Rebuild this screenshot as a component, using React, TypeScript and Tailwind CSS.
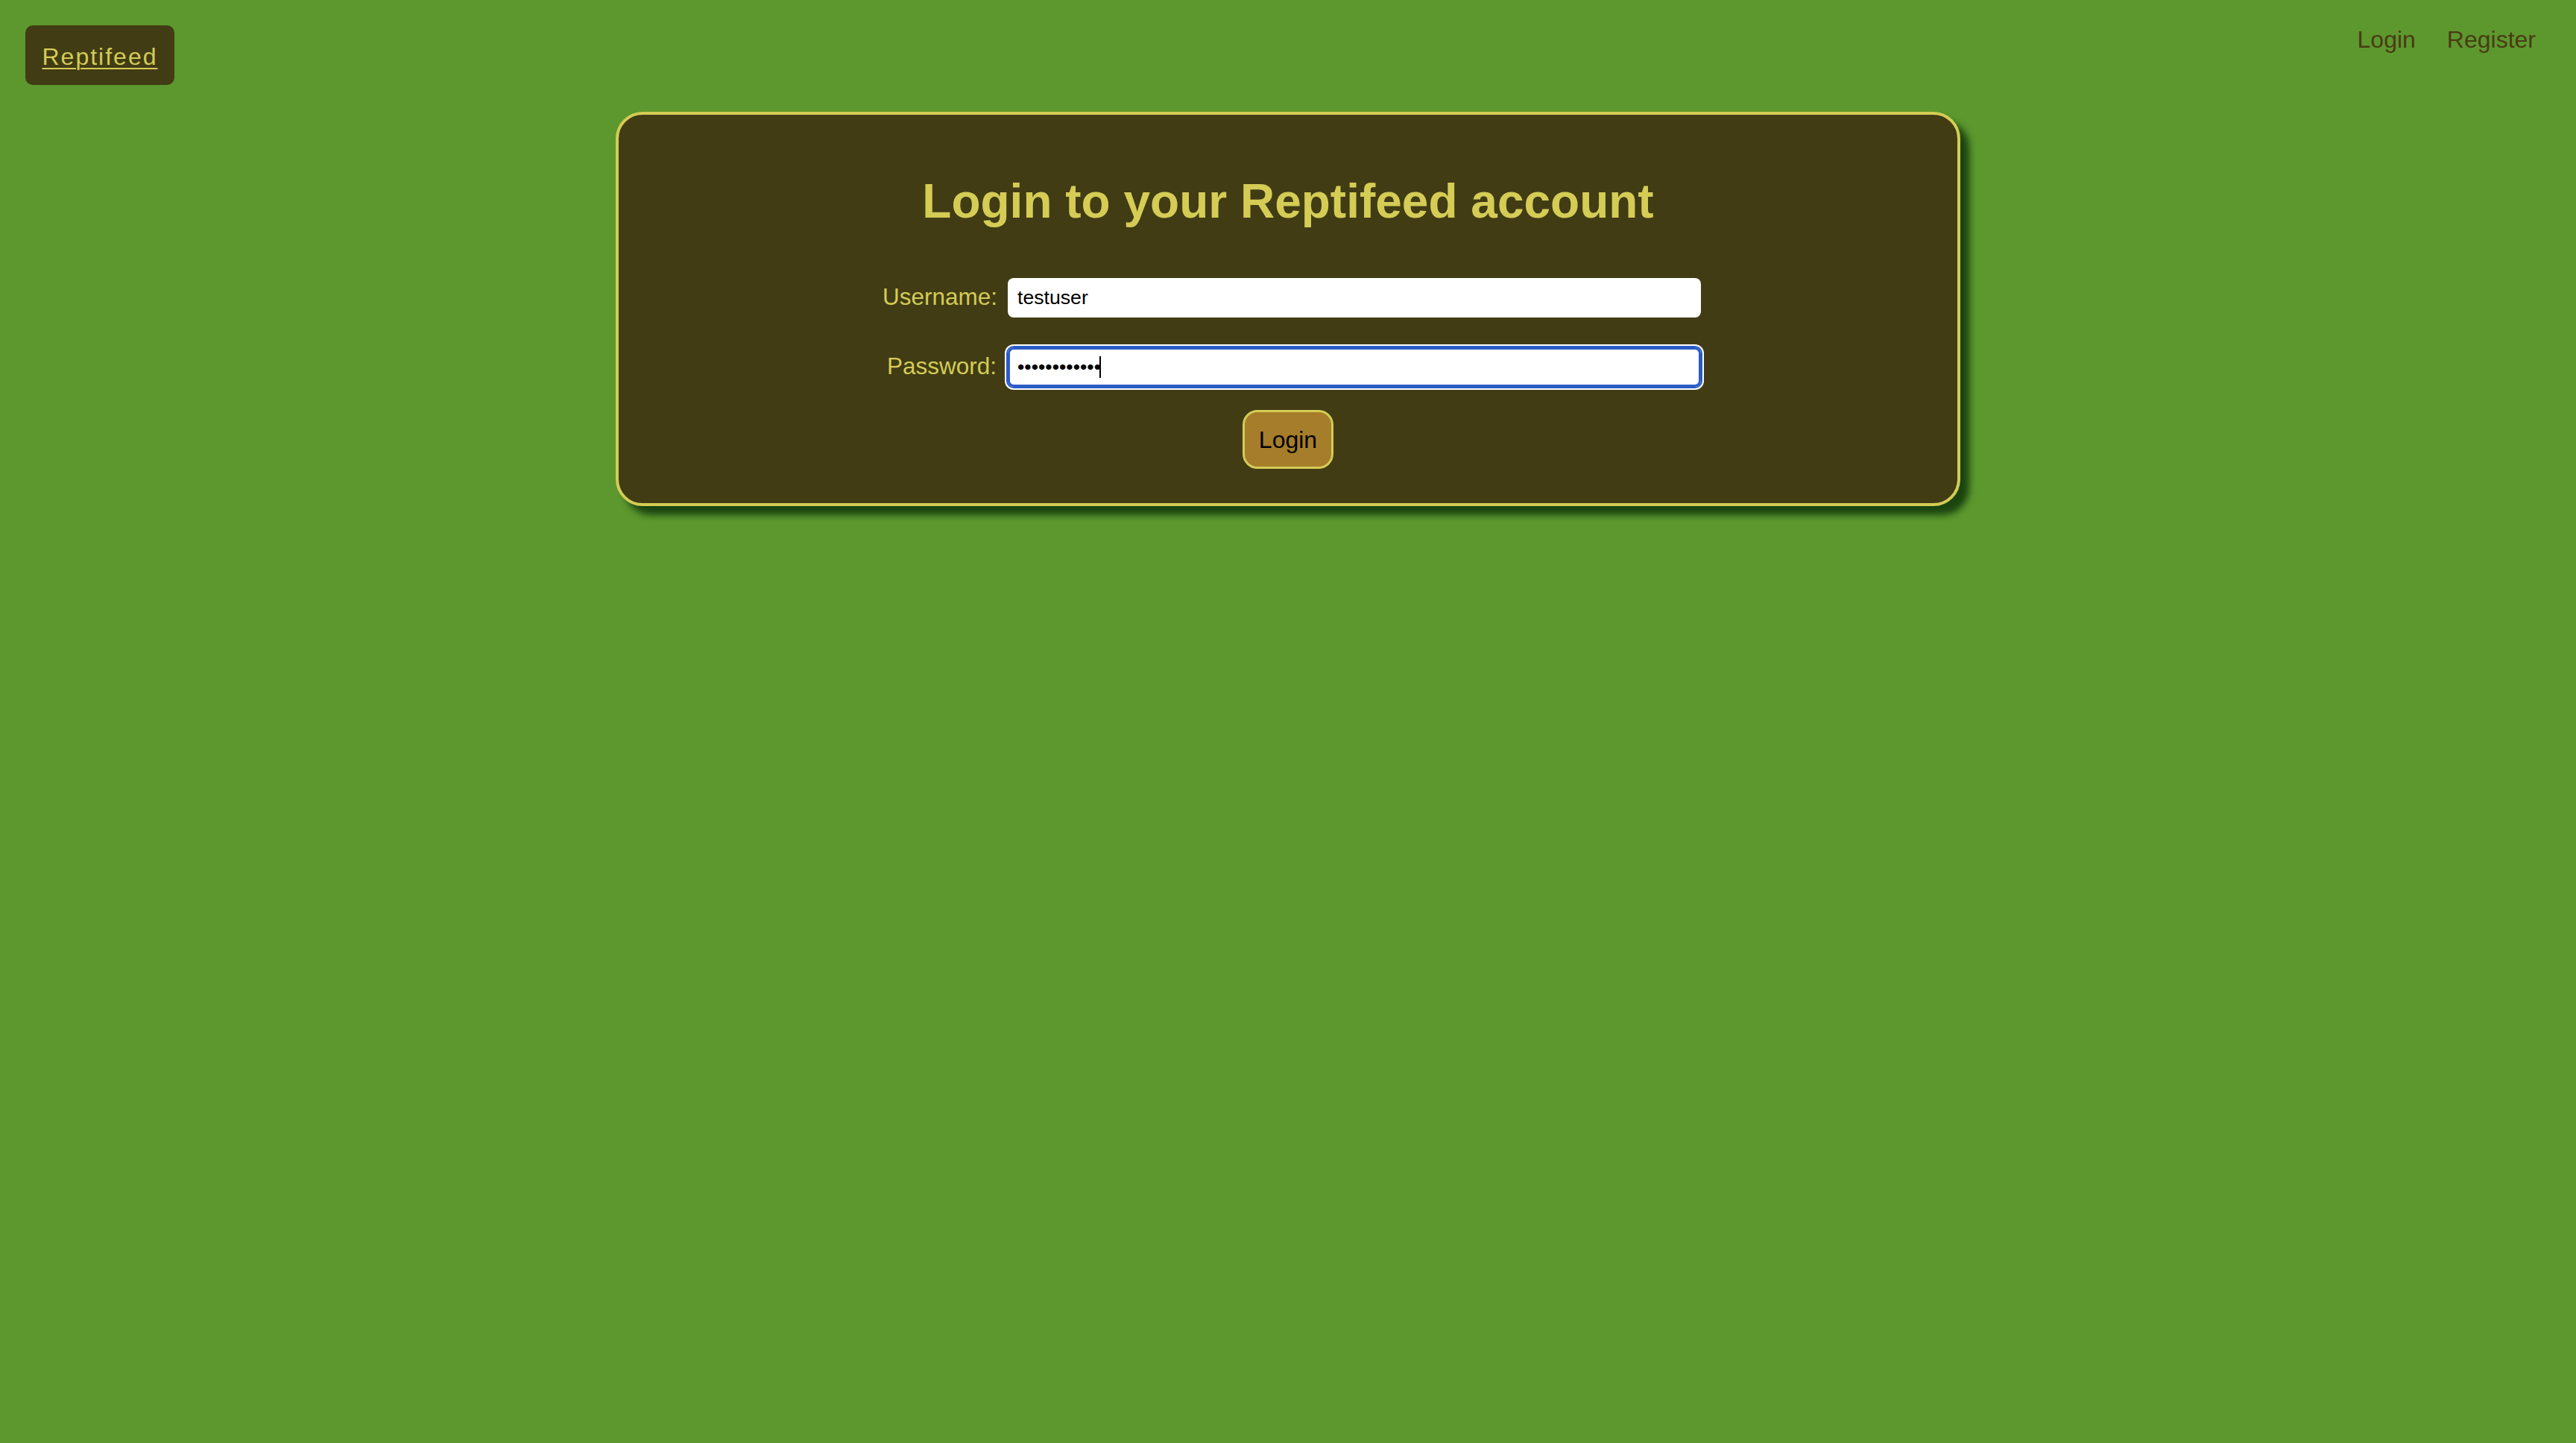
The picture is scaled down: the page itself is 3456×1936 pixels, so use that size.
import * as React from "react"

const font = { fontFamily: '"Liberation Sans", Arial, Helvetica, sans-serif' }

const Header: React.FC = () => (
	<header className="flex items-start justify-between pl-[34px] pr-[54px] pt-[34px]">
		<a
			href="#"
			className="flex h-[80px] w-[200px] items-center justify-center rounded-[10px] bg-[#413c14] pt-[3px] text-[32px] tracking-[2px] text-[#d4cc55] underline decoration-2 underline-offset-[4px]"
		>
			Reptifeed
		</a>
		<nav className="mt-[1px] flex gap-[42px] text-[32px] leading-[37px] text-[#4a3b13]">
			<a href="#">Login</a>
			<a href="#">Register</a>
		</nav>
	</header>
)

const LoginForm: React.FC = () => {
	const [username, setUsername] = React.useState("testuser")
	const [password, setPassword] = React.useState("abcdefghijkl")

	return (
		<form
			className="flex flex-col items-center"
			onSubmit={(e) => e.preventDefault()}
		>
			<div className="flex flex-col gap-[40px] pl-[10px]">
				<div className="flex items-center gap-[15px]">
					<label className="mb-[4px] w-[153px] text-right text-[31.5px] leading-[36px] text-[#d4cc55]">
						Username:
					</label>
					<input
						type="text"
						value={username}
						onChange={(e) => setUsername(e.target.value)}
						className="h-[53px] w-[930px] rounded-[8px] bg-white px-[13px] text-[26.67px] text-black outline-none"
						style={font}
					/>
				</div>
				<div className="flex items-center gap-[15px]">
					<label className="mb-[4px] w-[153px] text-right text-[31.5px] leading-[36px] text-[#d4cc55]">
						Password:
					</label>
					<div className="relative">
						<input
							type="password"
							value={password}
							onChange={(e) => setPassword(e.target.value)}
							className="h-[53px] w-[930px] rounded-[8px] bg-white px-[13px] text-[26.67px] text-black caret-transparent outline-none shadow-[0_0_0_2px_#2b5cc6,0_0_0_4px_#ffffff,inset_0_0_0_3px_#2b5cc6]"
							style={font}
						/>
						{/* blinking caret frozen in place */}
						<span className="pointer-events-none absolute left-[123px] top-[12px] h-[29px] w-[2px] bg-black" />
					</div>
				</div>
			</div>
			<button
				type="submit"
				className="mt-[31px] flex h-[79px] w-[122px] items-center justify-center rounded-[20px] border-[3px] border-[#d4cc55] bg-[#a67d2a] text-[32px] text-black"
			>
				Login
			</button>
		</form>
	)
}

export default function App() {
	return (
		<div className="min-h-screen w-full bg-[#5c982e]" style={font}>
			<Header />
			<main className="mt-[36px] flex justify-center">
				<div className="w-[1804px] rounded-[36px] border-[4px] border-[#d4cc55] bg-[#413c14] pb-[46px] pt-[79px] shadow-[12px_12px_10px_#1b4410]">
					<h1 className="mb-[66px] text-center text-[64px] font-bold leading-[74px] text-[#d4cc55]">
						Login to your Reptifeed account
					</h1>
					<LoginForm />
				</div>
			</main>
		</div>
	)
}
